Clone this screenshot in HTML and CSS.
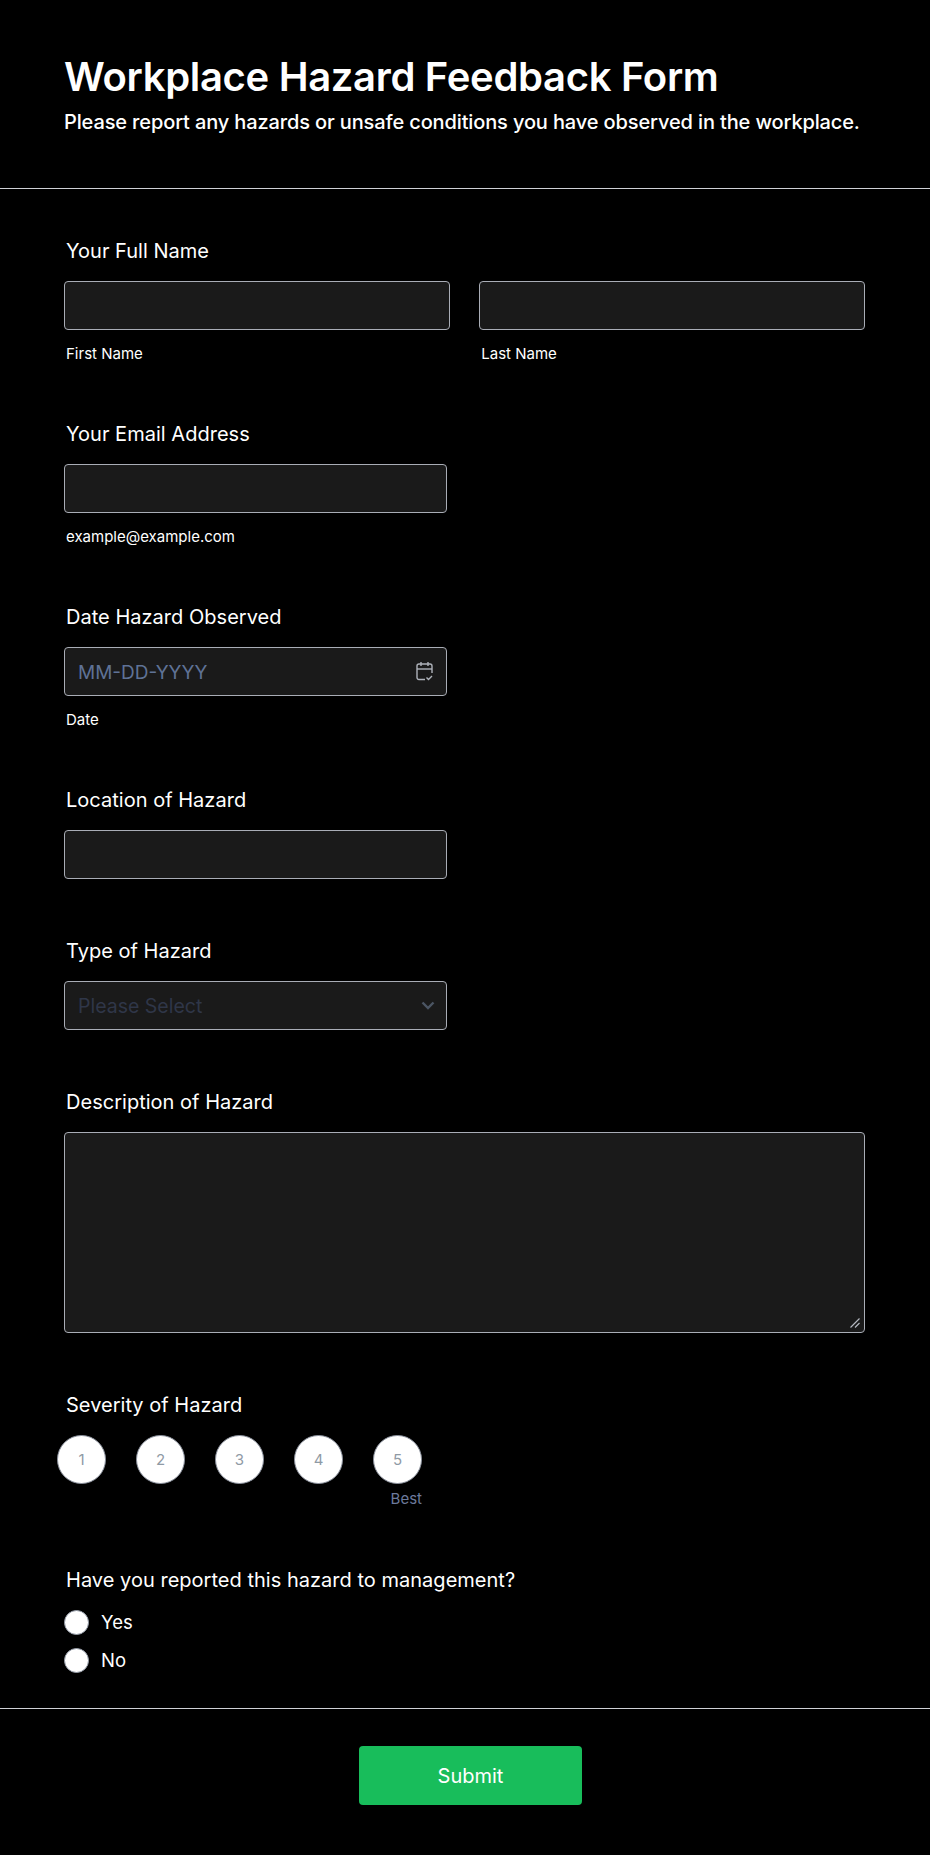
FILE: index.html
```html
<!DOCTYPE html>
<html lang="en">

<head>
  <meta charset="UTF-8">
  <meta name="viewport" content="width=device-width, initial-scale=1.0">
  <title>Workplace Hazard Feedback Form</title>
  <link rel="stylesheet" href="styles.css">
</head>

<body>
  <form id="form">
    <div id="header">
      <h1>Workplace Hazard Feedback Form</h1>
      <p>Please report any hazards or unsafe conditions you have observed in the workplace.</p>
    </div>

    <div id="fields">
      <div class="line">
        <label class="title">Your Full Name</label>
        <div class="name-row">
          <div class="name-col">
            <input type="text" class="box">
            <span class="sub">First Name</span>
          </div>
          <div class="name-col">
            <input type="text" class="box">
            <span class="sub">Last Name</span>
          </div>
        </div>
      </div>

      <div class="line">
        <label class="title">Your Email Address</label>
        <input type="email" class="box half">
        <span class="sub">example@example.com</span>
      </div>

      <div class="line">
        <label class="title">Date Hazard Observed</label>
        <div class="wrap half">
          <input type="text" class="box date" placeholder="MM-DD-YYYY">
          <svg class="cal" width="18" height="20" viewBox="0 0 18 20" fill="none" stroke="#aeb2ba" stroke-width="1.4">
            <path d="M9 18.5H3a2 2 0 0 1-2-2V5a2 2 0 0 1 2-2h11a2 2 0 0 1 2 2v7"/>
            <path d="M1 8h15"/>
            <path d="M5 1v4M12 1v4"/>
            <path d="M10.5 16.5l2 2 3.5-3.5"/>
          </svg>
        </div>
        <span class="sub">Date</span>
      </div>

      <div class="line short">
        <label class="title">Location of Hazard</label>
        <input type="text" class="box half">
      </div>

      <div class="line short">
        <label class="title">Type of Hazard</label>
        <div class="wrap half">
          <select class="box pick">
            <option>Please Select</option>
          </select>
          <svg class="chev" width="14" height="9" viewBox="0 0 14 9" fill="none" stroke="#4b5563" stroke-width="2.4">
            <path d="M1.5 1.5L7 7l5.5-5.5"/>
          </svg>
        </div>
      </div>

      <div class="line short">
        <label class="title">Description of Hazard</label>
        <div class="wrap">
          <textarea class="box area"></textarea>
          <svg class="grip" width="10" height="10" viewBox="0 0 10 10" fill="none" stroke="#b4b8c0" stroke-width="1.2">
            <path d="M0.5 9.5L9.5 0.5M5 9.5L9.5 5"/>
          </svg>
        </div>
      </div>

      <div class="line severity">
        <label class="title">Severity of Hazard</label>
        <div class="rating">
          <div class="num">1</div>
          <div class="num">2</div>
          <div class="num">3</div>
          <div class="num">4</div>
          <div class="num">5</div>
        </div>
        <div class="best">Best</div>
      </div>

      <div class="line last">
        <label class="title">Have you reported this hazard to management?</label>
        <div class="radio"><span class="dot"></span>Yes</div>
        <div class="radio"><span class="dot"></span>No</div>
      </div>
    </div>

    <div id="footer">
      <button type="button" id="submit">Submit</button>
    </div>
  </form>
</body>

</html>
```

FILE: styles.css
```css
* {
  box-sizing: border-box;
}

body {
  margin: 0;
  background-color: #000;
  color: #fff;
  font-family: 'Inter', sans-serif;
}

#header {
  height: 189px;
  padding: 52px 64px 0;
  border-bottom: 1px solid #cfd1d6;
}

h1 {
  margin: 0;
  font-size: 40px;
  line-height: 50px;
  font-weight: 600;
  letter-spacing: -0.32px;
}

#header p {
  margin: 6px 0 0;
  font-size: 20px;
  line-height: 28px;
  font-weight: 500;
  letter-spacing: -0.13px;
}

#fields {
  padding: 48px 65px 0 64px;
  border-bottom: 1px solid #cfd1d6;
}

.line {
  margin-bottom: 56px;
}

.line.short {
  margin-bottom: 58px;
}

.line.severity {
  margin-bottom: 57px;
}

.line.last {
  margin-bottom: 36px;
}

.title {
  display: block;
  margin: 0 0 16px 2px;
  font-size: 20px;
  line-height: 28px;
  font-weight: 400;
  letter-spacing: 0.02px;
}

.box {
  display: block;
  width: 100%;
  height: 49px;
  padding: 0 13px;
  background-color: #1a1a1a;
  border: 1px solid #a9adb6;
  border-radius: 4px;
  font-family: 'Inter', sans-serif;
  font-size: 19.5px;
  color: #fff;
  outline: none;
}

.half {
  width: 383px;
}

.sub {
  display: block;
  margin: 14px 0 0 2px;
  font-size: 15px;
  line-height: 20px;
}

.name-row {
  display: flex;
  gap: 29.6px;
}

.name-col {
  flex: 1;
}

.wrap {
  position: relative;
}

.date {
  padding-top: 2px;
  font-size: 19px;
}

.date::placeholder {
  color: #5f7296;
  opacity: 1;
}

.cal {
  position: absolute;
  top: 14px;
  right: 13px;
}

.pick {
  appearance: none;
  color: #2f3648;
}

.chev {
  position: absolute;
  top: 20px;
  right: 12px;
}

.area {
  height: 201px;
  resize: none;
}

.grip {
  position: absolute;
  right: 5px;
  bottom: 5px;
}

.rating {
  display: flex;
  gap: 30px;
  margin-left: -7px;
}

.num {
  width: 49px;
  height: 49px;
  display: flex;
  align-items: center;
  justify-content: center;
  background-color: #fff;
  border: 1px solid #8a909c;
  border-radius: 50%;
  font-size: 15px;
  color: #8f9aa5;
}

.best {
  width: 358px;
  margin-top: 5px;
  text-align: right;
  font-size: 15px;
  line-height: 20px;
  color: #6c7a9c;
}

.radio {
  display: flex;
  align-items: center;
  gap: 12px;
  height: 24px;
  margin-bottom: 14px;
  font-size: 18.5px;
}

.radio:last-child {
  margin-bottom: 0;
}

.dot {
  width: 25px;
  height: 25px;
  background-color: #fff;
  border: 1px solid #9299a5;
  border-radius: 50%;
}

#footer {
  display: flex;
  justify-content: center;
  padding: 37px 0 48px 0;
}

#submit {
  width: 223px;
  height: 59px;
  margin-left: 11px;
  background-color: #18bd5b;
  border: none;
  border-radius: 4px;
  font-family: 'Inter', sans-serif;
  font-size: 20px;
  font-weight: 400;
  color: #fff;
}
```
